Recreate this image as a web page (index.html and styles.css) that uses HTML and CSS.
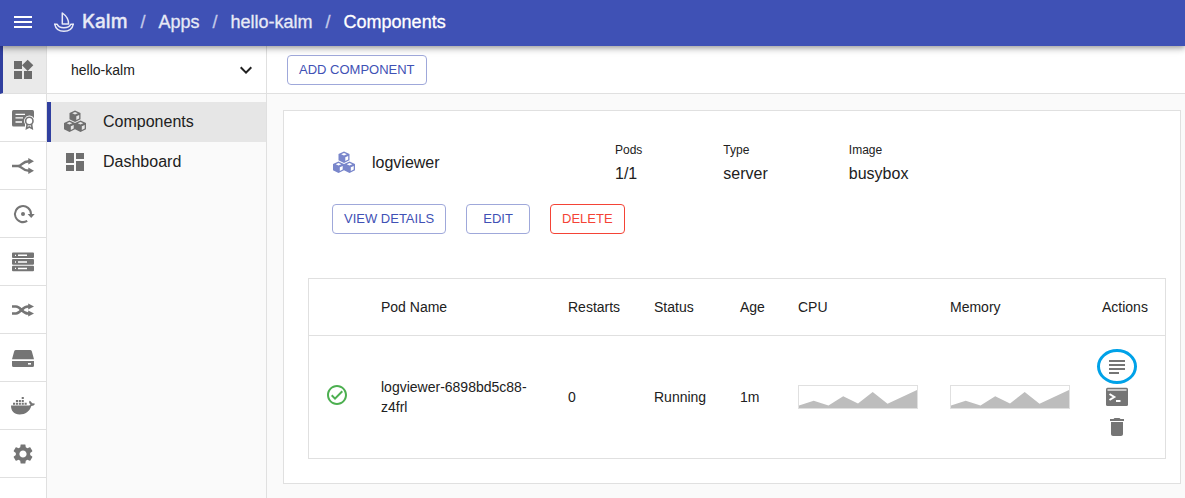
FILE: index.html
```html
<!DOCTYPE html>
<html lang="en">
<head>
<meta charset="utf-8">
<title>Kalm - hello-kalm Components</title>
<link rel="stylesheet" href="styles.css">
</head>
<body>
<svg class="defs" aria-hidden="true">
  <symbol id="cubes" viewBox="0 0 24 24">
    <g fill="currentColor" fill-rule="evenodd">
      <path transform="translate(6.5 .5)" d="M5.500 0 11 2.400V8.800L5.500 11.400 0 8.800V2.400ZM5.500 1.500 2.700 2.700 5.500 3.900 8.300 2.700ZM6.800 5.700V9.400L9.700 8V4.400Z"/>
      <path transform="translate(1 10.500)" d="M5.500 0 11 2.400V8.800L5.500 11.400 0 8.800V2.400ZM5.500 1.500 2.700 2.700 5.500 3.900 8.300 2.700ZM6.800 5.700V9.400L9.700 8V4.400Z"/>
      <path transform="translate(12 10.500)" d="M5.500 0 11 2.400V8.800L5.500 11.400 0 8.800V2.400ZM5.500 1.500 2.700 2.700 5.500 3.900 8.300 2.700ZM6.800 5.700V9.400L9.700 8V4.400Z"/>
    </g>
  </symbol>
  <symbol id="area" viewBox="0 0 118 22" preserveAspectRatio="none">
    <path fill="#bdbdbd" d="M0 19.5 14.7 14.7 29.5 19.5 44.2 10.2 59 17.5 73.7 6 88.5 17.7 118 4V22H0Z"/>
  </symbol>
</svg>

<header class="topbar">
  <button class="icon-button" type="button" aria-label="Menu">
    <svg class="icon" viewBox="0 0 24 24"><path fill="currentColor" d="M3 18h18v-2H3v2zm0-5h18v-2H3v2zm0-7v2h18V6H3z"/></svg>
  </button>
  <nav class="breadcrumb" aria-label="Breadcrumb">
    <a class="brand" href="#">
      <svg class="logo" viewBox="0 0 20 20" fill="none" stroke="currentColor" stroke-width="1.5" stroke-linejoin="round" stroke-linecap="round">
        <path d="M8.300 1V12H14.600C14.600 7.500 12 3.500 8.300 1Z"/>
        <path d="M.8 12.300H3.200C4.200 15 6.500 15.800 9.800 15.800 13.300 15.800 15.800 14.800 16.800 12.300H19.200"/>
        <path d="M.8 12.300C1.600 16.500 5 19.200 9.900 19.200 14.800 19.200 18.400 16.500 19.200 12.300"/>
      </svg>
      <span>Kalm</span>
    </a>
    <span class="slash">/</span>
    <a href="#">Apps</a>
    <span class="slash">/</span>
    <a href="#">hello-kalm</a>
    <span class="slash">/</span>
    <span class="current">Components</span>
  </nav>
</header>

<div class="layout">
  <nav class="rail" aria-label="Sections">
    <a class="rail-item active" href="#" aria-label="Apps">
      <svg class="icon" viewBox="0 0 24 24"><path fill="currentColor" d="M13 13v8h8v-8h-8zM3 21h8v-8H3v8zM3 3v8h8V3H3zm13.66-1.31L11 7.34 16.66 13l5.66-5.66-5.66-5.65z"/></svg>
    </a>
    <a class="rail-item" href="#" aria-label="Certificates">
      <svg class="icon" viewBox="0 0 24 24">
        <rect x="1" y="4" width="22" height="16.5" rx="1.5" fill="currentColor"/>
        <path stroke="#fff" stroke-width="1.3" d="M4.5 8.300H14M4.500 11.800H12M4.500 16H11"/>
        <path fill="#fff" d="M18.300 9.600a5.400 5.400 0 0 1 4.700 8V24h-9v-6a5.400 5.400 0 0 1 4.300-8.400z"/>
        <path fill="none" stroke="currentColor" stroke-width="1.600" d="M16.200 18.200 15.500 22.500 18.300 21 21.200 22.500 20.500 18.200"/>
        <circle cx="18.300" cy="15" r="3.700" fill="#fff" stroke="currentColor" stroke-width="1.600"/>
      </svg>
    </a>
    <a class="rail-item" href="#" aria-label="Routes">
      <svg class="icon" viewBox="0 0 24 24">
        <path fill="none" stroke="currentColor" stroke-width="2.400" d="M1 12H7C11 12 11 7.300 18 7.300M7 12C11 12 11 16.700 18 16.700"/>
        <path fill="currentColor" d="M17.300 4 23 7.300 17.300 10.600ZM17.300 13.400 23 16.700 17.300 20Z"/>
      </svg>
    </a>
    <a class="rail-item" href="#" aria-label="Deployments">
      <svg class="icon" viewBox="0 0 24 24">
        <path fill="none" stroke="currentColor" stroke-width="2" d="M16.200 18.900A8 8 0 1 1 20 12V13"/>
        <path fill="currentColor" d="M16.600 12H23.700L20.200 16Z"/>
        <circle cx="12" cy="12" r="2" fill="currentColor"/>
      </svg>
    </a>
    <a class="rail-item" href="#" aria-label="Nodes">
      <svg class="icon" viewBox="0 0 24 24">
        <path fill="currentColor" d="M2 2.500H22Q23 2.500 23 3.500V7Q23 8 22 8H2Q1 8 1 7V3.500Q1 2.500 2 2.500ZM2 9H22Q23 9 23 10V13.700Q23 14.700 22 14.700H2Q1 14.700 1 13.700V10Q1 9 2 9ZM2 15.700H22Q23 15.700 23 16.700V20.300Q23 21.300 22 21.300H2Q1 21.300 1 20.300V16.700Q1 15.700 2 15.700Z"/>
        <path fill="#fff" d="M4 4.700h1v1.300H4zM7 4.600h9v1.500H7zM4 11.200h1v1.500H4zM4 17.800h1v1.300H4zM7 17.800h9v1.500H7z"/>
        <path fill="#ddd" d="M7 11h9v2H7z"/>
      </svg>
    </a>
    <a class="rail-item" href="#" aria-label="Load balancer">
      <svg class="icon" viewBox="0 0 24 24">
        <path fill="none" stroke="currentColor" stroke-width="2.600" d="M1 8.500H5C10 8.500 11 15.500 17 15.500H18M1 15.500H5C10 15.500 11 8.500 17 8.500H18"/>
        <path fill="currentColor" d="M17.200 5.400 23 8.500 17.200 11.600ZM17.200 12.400 23 15.500 17.200 18.600Z"/>
      </svg>
    </a>
    <a class="rail-item" href="#" aria-label="Disks">
      <svg class="icon" viewBox="0 0 24 24">
        <path fill="currentColor" d="M5 4H19Q20.400 4 20.800 5.200L23 13.300H1L3.200 5.200Q3.600 4 5 4ZM1 15H23V19.500Q23 21 21.500 21H2.500Q1 21 1 19.500Z"/>
        <path fill="#fff" d="M17 17h3v1.600h-3z"/>
      </svg>
    </a>
    <a class="rail-item" href="#" aria-label="Registries">
      <svg class="icon" viewBox="0 0 24 24">
        <path fill="currentColor" d="M0 11.500H17.200C18.500 11.500 19.300 11 19.400 10.400 18 9.200 17.800 8 18.600 6.700 20 7.400 20.700 8.200 21 9.300 22 9 23.200 9.200 24 9.800 23.300 11.300 22 12 20.300 12 18.500 17.500 14.500 20.500 8.600 20.500 3 20.500 0 17 0 11.500Z"/>
        <path fill="currentColor" d="M2 8.700h2.100v2H2zM4.900 8.700H7v2H4.900zM7.800 8.700h2.100v2H7.800zM10.700 8.700h2.100v2h-2.100zM13.600 8.700h2.100v2h-2.100zM4.900 5.900H7v2H4.900zM7.800 5.900h2.100v2H7.800zM10.700 5.900h2.100v2h-2.100zM10.700 3.100h2.100v2h-2.100z"/>
      </svg>
    </a>
    <a class="rail-item" href="#" aria-label="Settings">
      <svg class="icon" viewBox="0 0 24 24"><path fill="currentColor" d="M19.140 12.940c.04-.3.060-.61.060-.94 0-.32-.02-.64-.07-.94l2.030-1.580c.18-.14.230-.41.120-.61l-1.920-3.320c-.12-.22-.37-.29-.59-.22l-2.390.96c-.5-.38-1.030-.7-1.620-.94l-.36-2.540c-.04-.24-.24-.41-.48-.41h-3.840c-.24 0-.43.170-.47.410l-.36 2.540c-.59.240-1.130.570-1.620.940l-2.390-.96c-.22-.08-.47 0-.59.220L2.740 8.870c-.12.210-.08.470.120.610l2.030 1.580c-.05.3-.09.630-.09.940s.02.640.070.940l-2.030 1.580c-.18.140-.23.410-.12.610l1.920 3.320c.12.220.37.290.59.220l2.390-.96c.5.380 1.030.7 1.620.94l.36 2.540c.05.240.24.410.48.410h3.840c.24 0 .44-.17.470-.41l.36-2.540c.59-.24 1.130-.56 1.620-.94l2.390.96c.22.080.47 0 .59-.22l1.920-3.320c.12-.22.070-.47-.12-.61l-2.010-1.580zM12 15.600c-1.980 0-3.600-1.620-3.600-3.600s1.620-3.600 3.600-3.600 3.600 1.620 3.600 3.600-1.620 3.600-3.600 3.600z"/></svg>
    </a>
  </nav>

  <aside class="sidebar">
    <button class="app-select" type="button" aria-haspopup="listbox">
      <span>hello-kalm</span>
      <svg class="chevron" viewBox="0 0 12 12" fill="none" stroke="currentColor" stroke-width="2"><path d="M.7 3.300 6 8.600 11.300 3.300"/></svg>
    </button>
    <nav class="menu" aria-label="Application">
      <a class="menu-item selected" href="#"><svg class="icon"><use href="#cubes"/></svg><span>Components</span></a>
      <a class="menu-item" href="#"><svg class="icon" viewBox="0 0 24 24"><path fill="currentColor" d="M3 13h8V3H3v10zm0 8h8v-6H3v6zm10 0h8V11h-8v10zm0-18v6h8V3h-8z"/></svg><span>Dashboard</span></a>
    </nav>
  </aside>

  <main class="main">
    <div class="toolbar"><button class="button" type="button">ADD COMPONENT</button></div>
    <section class="card">
      <div class="summary">
        <div class="info">
          <div class="name"><svg class="icon"><use href="#cubes"/></svg><span>logviewer</span></div>
          <div class="fact"><span class="label">Pods</span><span>1/1</span></div>
          <div class="fact"><span class="label">Type</span><span>server</span></div>
          <div class="fact"><span class="label">Image</span><span>busybox</span></div>
        </div>
        <div class="buttons">
          <button class="button" type="button">VIEW DETAILS</button>
          <button class="button" type="button">EDIT</button>
          <button class="button danger" type="button">DELETE</button>
        </div>
      </div>
      <table class="pods">
        <colgroup>
          <col class="col-state"><col><col class="col-mid"><col class="col-mid"><col class="col-age"><col class="col-chart"><col class="col-chart"><col class="col-actions">
        </colgroup>
        <thead>
          <tr><th></th><th>Pod Name</th><th>Restarts</th><th>Status</th><th>Age</th><th>CPU</th><th>Memory</th><th>Actions</th></tr>
        </thead>
        <tbody>
          <tr>
            <td><svg class="icon ok" viewBox="0 0 24 24" role="img" aria-label="Healthy"><path fill="currentColor" d="M12 2C6.480 2 2 6.480 2 12s4.480 10 10 10 10-4.480 10-10S17.520 2 12 2zm0 18c-4.410 0-8-3.590-8-8s3.590-8 8-8 8 3.590 8 8-3.590 8-8 8zm4.590-12.420L10 14.170l-2.590-2.580L6 13l4 4 8-8z"/></svg></td>
            <td>logviewer-6898bd5c88-z4frl</td>
            <td>0</td>
            <td>Running</td>
            <td>1m</td>
            <td><svg class="chart" role="img" aria-label="CPU usage"><use href="#area"/></svg></td>
            <td><svg class="chart" role="img" aria-label="Memory usage"><use href="#area"/></svg></td>
            <td class="actions">
              <button class="action" type="button" aria-label="Logs">
                <svg class="icon" viewBox="0 0 24 24"><path fill="currentColor" d="M14 17H4v2h10v-2zm6-8H4v2h16V9zM4 15h16v-2H4v2zM4 5v2h16V5H4z"/></svg>
                <span class="ring"></span>
              </button>
              <button class="action" type="button" aria-label="Shell">
                <svg class="icon" viewBox="0 0 24 24">
                  <rect x="1" y="2.700" width="22" height="18.300" rx="1.500" fill="currentColor"/>
                  <path stroke="#fff" stroke-width="1.200" d="M2.500 5H21.500"/>
                  <path fill="none" stroke="#fff" stroke-width="2" d="M4.500 9 9.300 12 4.500 15M11 16H15.500"/>
                </svg>
              </button>
              <button class="action" type="button" aria-label="Delete pod">
                <svg class="icon" viewBox="0 0 24 24"><path fill="currentColor" d="M6 19c0 1.100.9 2 2 2h8c1.100 0 2-.9 2-2V7H6v12zM19 4h-3.500l-1-1h-5l-1 1H5v2h14V4z"/></svg>
              </button>
            </td>
          </tr>
        </tbody>
      </table>
    </section>
  </main>
</div>
</body>
</html>
```

FILE: styles.css
```css
* { box-sizing: border-box; }

body {
  margin: 0;
  min-height: 100vh;
  display: flex;
  flex-direction: column;
  background: #fafafa;
  color: #212121;
  font: 16px/24px "Liberation Sans", Arial, sans-serif;
}

a { color: inherit; text-decoration: none; }

button {
  margin: 0;
  padding: 0;
  border: 0;
  background: none;
  color: inherit;
  font: inherit;
  cursor: pointer;
}

.defs { position: absolute; width: 0; height: 0; }
.icon { width: 24px; height: 24px; flex: none; }

.topbar {
  position: relative;
  z-index: 1;
  display: flex;
  align-items: center;
  gap: 19px;
  height: 46px;
  padding: 0 11px 2px;
  background: #3f51b5;
  color: #fff;
  box-shadow: 0 2px 4px -1px rgba(0, 0, 0, .2), 0 4px 5px rgba(0, 0, 0, .14), 0 1px 10px rgba(0, 0, 0, .12);
}

.icon-button, .action {
  display: flex;
  align-items: center;
  justify-content: center;
}

.breadcrumb {
  display: flex;
  align-items: center;
  gap: 13px;
  font-size: 18px;
  -webkit-text-stroke: 0.3px currentColor;
}

.breadcrumb a { color: #e8eaf6; }
.slash { width: 5px; text-align: center; color: #c5cae9; }

.brand {
  display: flex;
  align-items: center;
  gap: 8px;
  font-family: Inter, sans-serif;
  font-size: 19px;
  font-weight: 500;
}

.logo { width: 20px; height: 20px; }

.layout { display: flex; flex: 1; }

.rail {
  flex: none;
  width: 47px;
  background: #fff;
  border-right: 1px solid #e0e0e0;
}

.rail-item {
  display: flex;
  align-items: center;
  justify-content: center;
  height: 48px;
  border-bottom: 1px solid #e0e0e0;
  color: #757575;
}

.rail-item.active {
  padding-right: 3px;
  border-left: 3px solid #303f9f;
  background: #eaeaea;
  color: #6b6b6b;
}

.sidebar {
  flex: none;
  width: 220px;
  border-right: 1px solid #e0e0e0;
}

.app-select {
  display: flex;
  align-items: center;
  justify-content: space-between;
  width: 100%;
  height: 48px;
  padding: 0 14px 0 24px;
  border-bottom: 1px solid #e0e0e0;
  background: #fff;
  font-size: 14px;
}

.chevron { width: 12px; height: 12px; }

.menu { padding-top: 8px; }

.menu-item {
  display: flex;
  align-items: center;
  gap: 16px;
  height: 40px;
  padding-left: 12px;
  border-left: 4px solid transparent;
}

.menu-item .icon { color: #6f6f6f; }
.menu-item.selected { border-color: #303f9f; background: #e6e6e6; }

.main { flex: 1; min-width: 0; }

.toolbar {
  display: flex;
  align-items: center;
  height: 48px;
  padding: 0 20px;
  background: #fff;
  border-bottom: 1px solid #e0e0e0;
}

.button {
  min-width: 64px;
  height: 30px;
  padding: 0 11px;
  border: 1px solid #9fa8da;
  border-radius: 4px;
  background: #fff;
  color: #3f51b5;
  font-size: 13px;
  line-height: 28px;
  white-space: nowrap;
}

.button.danger { border-color: #f44336; color: #f44336; }

.card {
  margin: 16px 4px 14px 16px;
  padding: 24px 14px 24px 24px;
  border: 1px solid #e0e0e0;
  background: #fff;
}

.summary { padding: 3px 24px 44px; }

.info {
  display: grid;
  grid-template-columns: 202px repeat(3, max-content);
  column-gap: 81px;
  align-items: center;
}

.name { display: flex; align-items: center; gap: 16px; padding-top: 2px; }
.name .icon { color: #7986cb; }
.fact { display: flex; flex-direction: column; }
.label { font-size: 12px; }

.buttons { display: flex; gap: 20px; margin-top: 18px; }

.pods {
  width: 100%;
  table-layout: fixed;
  border-collapse: separate;
  border-spacing: 0;
  border: 1px solid #e0e0e0;
  font-size: 14px;
  line-height: 20px;
}

.pods th, .pods td { padding: 0 16px; text-align: left; font-weight: normal; }
.pods th { height: 57px; border-bottom: 1px solid #e0e0e0; }
.pods td { height: 122px; vertical-align: middle; }

.col-state { width: 56px; }
.col-mid { width: 86px; }
.col-age { width: 58px; }
.col-chart { width: 152px; }
.col-actions { width: 79px; }

.ok { color: #4caf50; }

.chart { display: block; width: 120px; height: 24px; border: 1px solid #e0e0e0; }

.pods .actions { padding-right: 0; }

.action {
  position: relative;
  width: 30px;
  height: 30px;
  color: #757575;
}

.ring {
  position: absolute;
  inset: -3px -5px -2px;
  border: 3px solid #00a2e8;
  border-radius: 50%;
}
```
